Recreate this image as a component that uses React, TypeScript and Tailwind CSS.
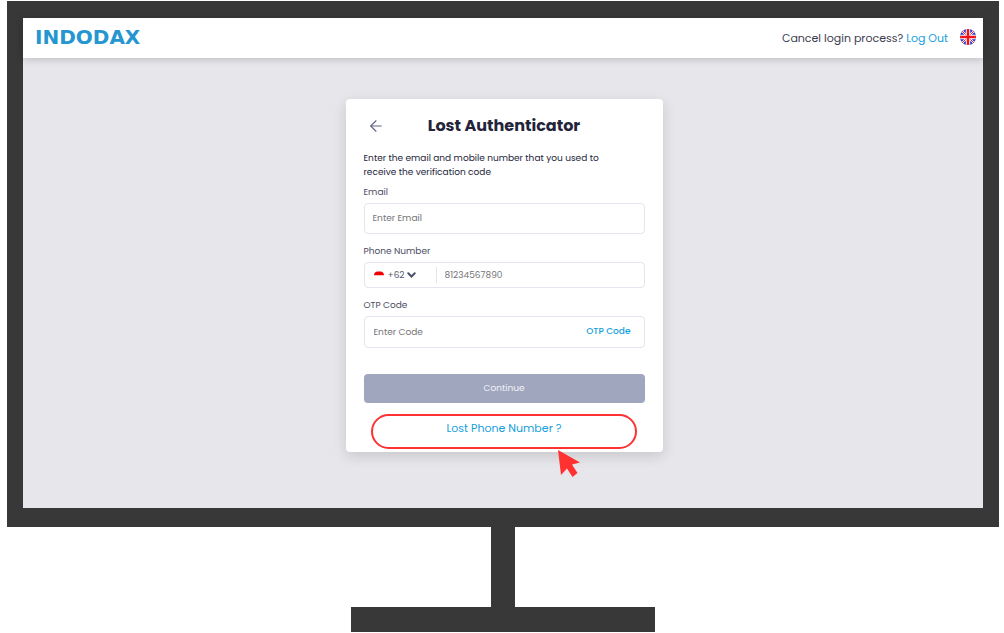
import { FiArrowLeft } from 'react-icons/fi'

type FieldProps = {
  id: string
  label: string
  children: React.ReactNode
}

const UkFlag = () => (
  <svg viewBox="0 0 32 32" className="size-4" aria-hidden="true">
    <clipPath id="uk-round">
      <circle cx="16" cy="16" r="16" />
    </clipPath>
    <g clipPath="url(#uk-round)">
      <rect width="32" height="32" fill="#2438c8" />
      <path d="M2 2l28 28M30 2L2 30" stroke="#fff" strokeWidth="4" />
      <path d="M2 2l28 28M30 2L2 30" stroke="#e8202e" strokeWidth="2" />
      <path d="M16 0v32M0 16h32" stroke="#fff" strokeWidth="9" />
      <path d="M16 0v32M0 16h32" stroke="#f0141e" strokeWidth="5" />
    </g>
  </svg>
)

const IndonesiaFlag = () => (
  <svg viewBox="0 0 20 16" className="h-2 w-[10px] shrink-0" aria-hidden="true">
    <path d="M0 8.500C0 3.500 3.500 1 7 1h6c3.500 0 7 2.500 7 7.500z" fill="#f00000" />
  </svg>
)

const Chevron = () => (
  <svg viewBox="0 0 18 12" className="pointer-events-none absolute left-[42px] h-[6px] w-[9px]" aria-hidden="true">
    <path d="M2.500 2.500L9 9l6.500-6.500" fill="none" stroke="#4c5168" strokeWidth="4" strokeLinecap="round" />
  </svg>
)

const Pointer = () => (
  <svg viewBox="0 0 22 28" className="absolute left-[185px] top-[34px] h-7 w-[22px]" aria-hidden="true">
    <path d="M0 0L22 12.500L14 14.500L19.500 23L14.500 27L9 18.500L3 25z" fill="#ff3131" />
  </svg>
)

const Field = ({ id, label, children }: FieldProps) => (
  <div>
    <label htmlFor={id} className="block text-[9px] leading-[14px] text-[#4a4d63]">{label}</label>
    <div className="mt-1 flex items-center rounded-sm border border-[#e4e5ee]">
      {children}
    </div>
  </div>
)

const Header = () => (
  <header className="relative flex h-10 items-center justify-between bg-white pl-3 pr-[7px] shadow-[0_1px_8px_rgba(0,0,0,0.2)]">
    <a href="#" className="pb-[2px] font-['DejaVu_Sans',sans-serif] text-[20px] font-bold leading-6 text-[#2596cf]">INDODAX</a>
    <div className="flex items-center">
      <p className="text-[11px] leading-4 text-[#3a3c4e]">
        Cancel login process? <a href="#" className="text-[#16a0db]">Log Out</a>
      </p>
      <button type="button" aria-label="Language" className="ml-3 pb-[3px]">
        <UkFlag />
      </button>
    </div>
  </header>
)

const LostAuthenticator = () => (
  <form className="mx-auto w-[317px] rounded bg-white px-[18px] pb-[3px] pt-[17px] shadow-[0_4px_14px_rgba(0,0,0,0.14)]">
    <div className="grid grid-cols-[24px_1fr_24px] items-center">
      <button type="button" aria-label="Back" className="flex justify-center text-[#5f6484]">
        <FiArrowLeft size={18} strokeWidth={1.5} />
      </button>
      <h1 className="text-center text-[16px] font-bold leading-5 text-[#23243a]">Lost Authenticator</h1>
    </div>
    <p className="mt-[15px] pr-8 text-[9px] leading-[14px] text-[#23253a]">
      Enter the email and mobile number that you used to receive the verification code
    </p>

    <div className="mt-[6px] flex flex-col gap-[10px]">
      <Field id="email" label="Email">
        <input id="email" type="email" placeholder="Enter Email" className="h-[29px] w-full px-2 text-[9px] outline-none placeholder:text-[#757575]" />
      </Field>
      <Field id="phone" label="Phone Number">
        <div className="relative flex w-[72px] shrink-0 items-center gap-1 border-r border-[#e4e5ee] pl-[9px]">
          <IndonesiaFlag />
          <select aria-label="Country code" className="w-8 appearance-none text-[9px] leading-4 text-[#555a70] outline-none">
            <option>+62</option>
          </select>
          <Chevron />
        </div>
        <input id="phone" type="tel" placeholder="81234567890" className="h-6 w-full px-2 text-[9px] outline-none placeholder:text-[#757575]" />
      </Field>
      <Field id="otp" label="OTP Code">
        <input id="otp" type="text" placeholder="Enter Code" className="h-[30px] w-full px-[9px] text-[9px] outline-none placeholder:text-[#757575]" />
        <button type="button" className="shrink-0 pr-[13px] text-[9px] font-medium text-[#16a0db]">OTP Code</button>
      </Field>
    </div>

    <button type="submit" className="mt-[26px] block h-[29px] w-full rounded-sm bg-[#a1a6bf] text-[9px] text-[#f1f2f7]">Continue</button>

    <div className="relative mx-auto mt-[11px] flex h-[35px] w-[266px] justify-center rounded-full border-2 border-[#ff3131] pt-1">
      <a href="#" className="text-[11px] leading-4 text-[#16a0db]">Lost Phone Number ?</a>
      <Pointer />
    </div>
  </form>
)

const App = () => {
  return (
    <div className="min-h-screen bg-white pl-[7px] pr-[5px] pt-px font-['Poppins','Inter',sans-serif]">
      <div className="border-x-[16px] border-b-[19px] border-t-[17px] border-[#383838] bg-[#e7e6eb]">
        <Header />
        <main className="pb-14 pl-[2px] pt-[41px]">
          <LostAuthenticator />
        </main>
      </div>
      <div className="mx-auto h-20 w-6 bg-[#383838]" />
      <div className="mx-auto h-[25px] w-[304px] bg-[#383838]" />
    </div>
  )
}

export default App
